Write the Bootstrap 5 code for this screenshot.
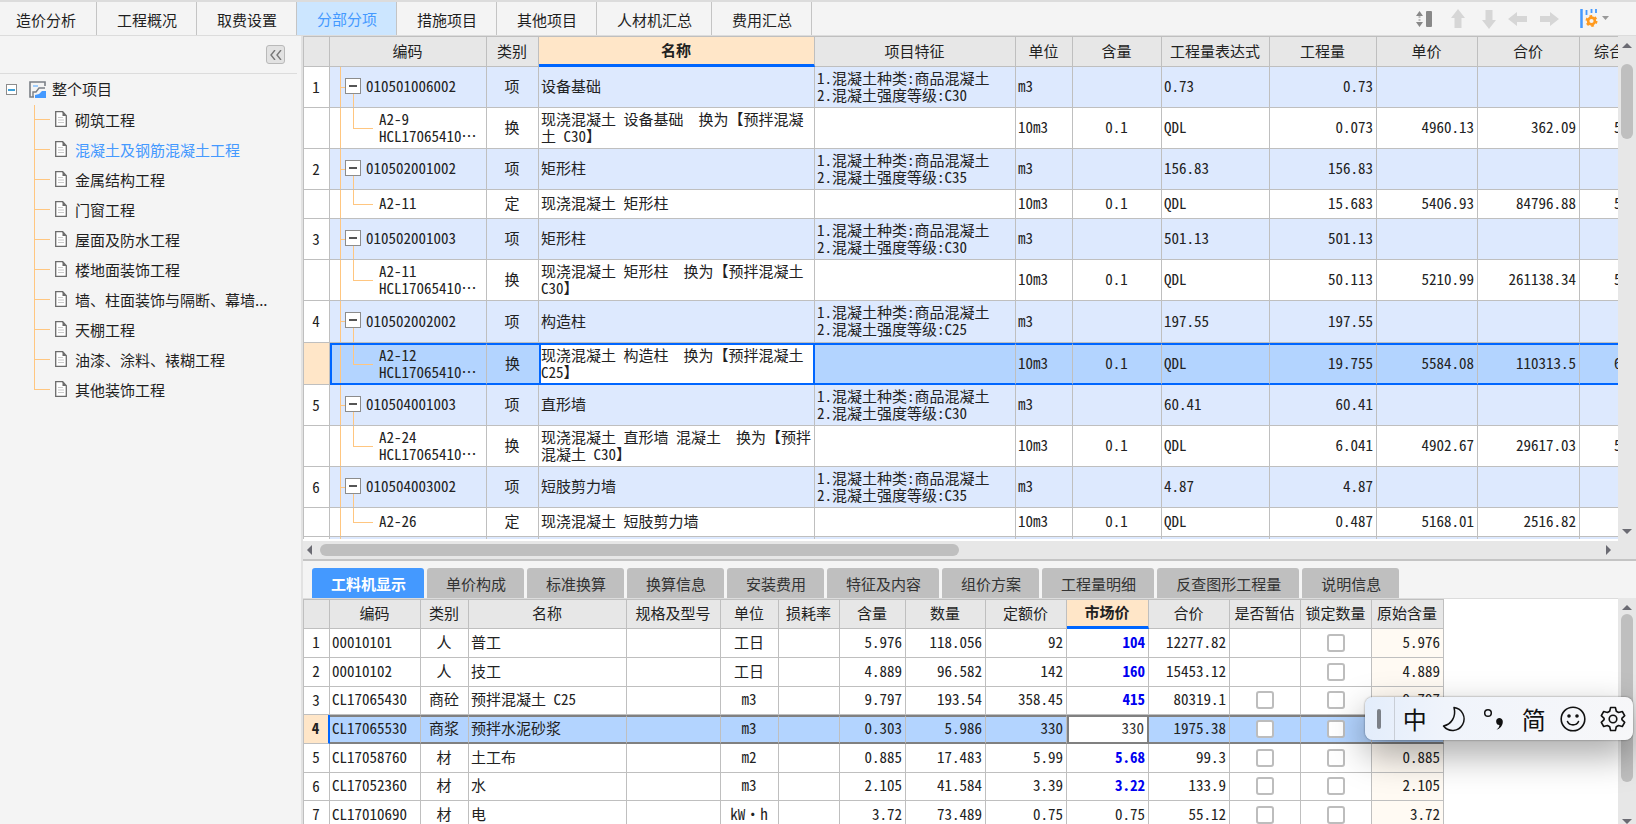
<!DOCTYPE html>
<html lang="zh-CN">
<head>
<meta charset="utf-8">
<meta name="viewport" content="width=device-width, initial-scale=1">
<title>分部分项</title>
<link rel="stylesheet" href="https://cdn.jsdelivr.net/npm/bootstrap@5.3.0/dist/css/bootstrap.min.css">
<style>
:root{--line:#bfbfbf;--tree:#ffc680;--accent:#0066ff;--bar:#e7e7e7;--thumb:#bfbfbf}
body{font-family:"Noto Sans CJK SC",sans-serif;font-size:15px;color:#1f1f1f;background:#f4f4f4}
button{font:inherit;color:inherit}

/* top bar */
.topbar{height:36px;border-top:2px solid #dcdcdc;border-bottom:1px solid #dcdcdc}
.topbar .nav-link{width:auto;height:33px;padding:0 19px 0 20px;line-height:36px;color:#1f1f1f;border-right:1px solid #c4c4c4;border-radius:0}
.topbar .nav-item:first-child .nav-link{padding:0 20px 0 16px}
.topbar .nav-link.active{background:#cce6ff;color:#4499ff;line-height:33px}
.tool{border:0;background:none;padding:0;display:flex}
.tools{padding-right:27px}

/* project tree */
.side{width:297px}
.side-head{height:38px;padding-right:12px;border-bottom:1px solid #dcdcdc}
.fold{width:19px;height:19px;padding:0;border:1px solid #b9b9b9;border-radius:3px;background:#e2e2e2}
.root{height:31px;padding-left:6px}
.box-sm{width:11px;height:11px;padding:0;border:1px solid #8c8c8c;background:#fff;color:#3da0d8}
.root-icon{margin-left:12px;margin-right:6px}
.tree li{height:30px;padding-left:55px;gap:8px;
  background:linear-gradient(var(--tree),var(--tree)) 34px 0/1px 100% no-repeat,linear-gradient(var(--tree),var(--tree)) 34px 14px/16px 1px no-repeat}
.tree li:last-child{background-size:1px 15px,16px 1px}
.tree svg{margin-bottom:2px}
.tree a{color:#1f1f1f;text-decoration:none;line-height:30px}
.tree a.active{color:#4499ff}
.work{border-left:2px solid #e2e2e2;margin-left:4px}

/* grids */
.sheet{table-layout:fixed;border-collapse:separate;border-spacing:0;margin:0;color:#222;background:#fff;line-height:17px;
  font-family:"Noto Sans Mono CJK SC","Liberation Mono","Noto Sans CJK SC",monospace;font-size:15px}
.sheet th,.sheet td{padding:0 3px 3px 2px;border-right:1px solid var(--line);border-bottom:1px solid var(--line);vertical-align:middle;white-space:nowrap;overflow:hidden}
.sheet th{background:#e7e7e7;font-weight:400;text-align:center;padding:0 1px 2px 0}
.sheet thead th{border-top:1px solid var(--line)}
.sheet tbody th{background:#fff}
.sheet thead .sorted{background:#ffe6c8;font-weight:700;border-bottom:3px solid var(--accent)}
.sheet tr>:first-child{border-left:1px solid var(--line)}
.bill thead tr{height:31px}
.bill tbody tr{height:41px}
.bill tbody tr.one{height:29px}
.bill tbody tr.tall{height:42px}
.bill .item td{background-color:#dde9fe}
.code{--t:linear-gradient(var(--tree),var(--tree))}
.item .code{padding-left:15px;background:var(--t) 10px 0/1px 100% no-repeat,var(--t) 10px 50%/6px 1px no-repeat,linear-gradient(transparent 50%,var(--tree) 50%) 23px 0/1px 100% no-repeat}
.sub .code{padding-left:49px;background:var(--t) 10px 0/1px 100% no-repeat,var(--t) 23px 50%/20px 1px no-repeat,linear-gradient(var(--tree) 50%,transparent 50%) 23px 0/1px 100% no-repeat}
.box{width:16px;height:16px;padding:0;border:1px solid #8c8c8c;background:#fff;margin-right:5px}
.bill .picked td{background-color:#b3d4ff;border-top:2px solid var(--accent);border-bottom:2px solid var(--accent)}
.bill .picked .code{border-left:2px solid var(--accent);padding-left:47px;background-position:8px 0,21px 50%,21px 0}
.bill .picked td.edit{background:#fff;border-left:2px solid var(--accent);border-right:2px solid var(--accent);padding-left:0}
.bill .picked .kind{border-right:0}
.sheet .picked th{background:#ffe6c8;font-weight:700}
.sheet th.cut{text-align:left;padding-left:14px}
.sheet td.cut{padding-left:34px}
.viewport{background:#fff}
.pane-top .viewport{border-bottom:2px solid #fff}
.mats thead tr{height:30px}
.mats tbody tr{height:29px}
.mats tbody tr:nth-child(3n){height:28px}
.mats .price{color:#0000f0;font-weight:700}
.mats .first-in{background:#fffaf3}
.mats .picked td{background:#b3d4ff;border-top:2px solid #808080;border-bottom:2px solid #808080}
.mats .picked td.edit{background:#fff;border-right:2px solid #808080;border-left:2px solid #808080;color:#333}
.mats .picked th{border-right:2px solid var(--accent)}
.sheet .form-check-input{width:18px;height:18px;margin:3px 0 0;border:2px solid #bdbdbd;border-radius:3px;display:block;margin-left:auto;margin-right:auto}

/* panes and scroll bars */
.pane-top{flex:524 1 0;border-bottom:2px solid #c4c4c4}
.pane-low{flex:264 1 0}
.vbar{width:18px;background:var(--bar);padding:7px 0}
.hbar{height:18px;background:var(--bar);padding:0 25px 0 4px}
.thumb{background:var(--thumb);border-radius:6px}
.vbar .thumb{width:12px}
.hbar .thumb{height:12px;width:49%}
.pane-top .vbar .thumb{height:75px}
.pane-low .vbar{padding:7px 0 0}
.pane-low .vbar .thumb{height:168px}
.detail{padding:7px 0 0 9px;gap:3px}
.detail .nav-link{height:30px;padding:0 18px 0 19px;line-height:31px;border-radius:3px 3px 0 0;background:#bfbfbf;color:#333}
.detail .nav-link.active{background:#4499ff;color:#fff;font-weight:700}
.rest{border-top:1px solid #dcdcdc}

/* input-method bar floating over the page */
.ime{right:3px;bottom:84px;width:268px;height:43px;border-radius:8px;background:linear-gradient(90deg,#e3edfb,#f0f4fb 30%,#f7f7f9);box-shadow:0 0 2px rgba(0,0,0,.5),0 14px 36px rgba(0,0,0,.36);color:#111;font-size:24px}
.grip{width:30px;border-right:1px solid #c9ced6}
.grip span{width:4px;height:20px;border-radius:2px;background:#7b8087}
.ime button{border:0;background:none;padding:0;width:40px;line-height:43px;display:flex;align-items:center;justify-content:center}
</style>
</head>
<body class="vh-100 d-flex flex-column overflow-hidden">

<header class="topbar d-flex justify-content-between flex-shrink-0">
  <ul class="nav flex-nowrap">
    <li class="nav-item"><a class="nav-link" href="#">造价分析</a></li>
    <li class="nav-item"><a class="nav-link" href="#">工程概况</a></li>
    <li class="nav-item"><a class="nav-link" href="#">取费设置</a></li>
    <li class="nav-item"><a class="nav-link active" href="#" aria-current="page">分部分项</a></li>
    <li class="nav-item"><a class="nav-link" href="#">措施项目</a></li>
    <li class="nav-item"><a class="nav-link" href="#">其他项目</a></li>
    <li class="nav-item"><a class="nav-link" href="#">人材机汇总</a></li>
    <li class="nav-item"><a class="nav-link" href="#">费用汇总</a></li>
  </ul>
  <div class="tools d-flex align-items-center">
    <button class="tool me-3" aria-label="行高"><svg width="18" height="18" viewBox="0 0 18 18"><path d="M0 6 3.500 1 7 6zM0 12l3.500 5L7 12z" fill="#888"/><path d="M3.500 6v6" stroke="#bbb" stroke-width="2" stroke-dasharray="2 1"/><rect x="10" y="1" width="6" height="16" rx="1" fill="#888"/></svg></button>
    <button class="tool" aria-label="上移"><svg width="16" height="20" viewBox="0 0 16 20"><path d="M8 0l7 9h-3.500v10h-7V9H1z" fill="#d6d6d6"/></svg></button>
    <button class="tool ms-3" aria-label="下移"><svg width="14" height="20" viewBox="0 0 14 20"><path d="M7 20L0 11h3.500V1h7v10H14z" fill="#d6d6d6"/></svg></button>
    <button class="tool ms-2 ps-1" aria-label="升级"><svg width="20" height="14" viewBox="0 0 20 14"><path d="M0 7l9-7v4h10v6H9v4z" fill="#d6d6d6"/></svg></button>
    <button class="tool ms-2 ps-1" aria-label="降级"><svg width="20" height="14" viewBox="0 0 20 14"><path d="M19 7l-9-7v4H0v6h10v4z" fill="#d6d6d6"/></svg></button>
    <button class="tool ms-3 ps-1 align-items-center" aria-label="列设置"><svg width="18" height="19" viewBox="0 0 18 19"><path d="M1.500 0v19" stroke="#4499ff" stroke-width="2.500"/><path d="M6.500 1v5M11.500 0v4M16 0v4" stroke="#4499ff" stroke-width="1.800"/><g transform="translate(11.500 12)" fill="none" stroke="#ff9a1f"><circle r="3.400" stroke-width="2.600"/><circle r="5" stroke-width="2" stroke-dasharray="2.600 2.640"/></g></svg><svg class="ms-1" width="7" height="5" viewBox="0 0 7 5"><path d="M0 0h7L3.500 4z" fill="#999"/></svg></button>
  </div>
</header>

<div class="d-flex flex-fill overflow-hidden">
  <aside class="side flex-shrink-0">
    <div class="side-head d-flex align-items-center justify-content-end">
      <button class="fold d-flex align-items-center justify-content-center" aria-label="收起"><svg width="12" height="10" viewBox="0 0 12 10" fill="none" stroke="#777" stroke-width="1.400"><path d="M5 0L1 5l4 5M11 0L7 5l4 5"/></svg></button>
    </div>
    <div class="root d-flex align-items-center">
      <button class="box-sm d-flex align-items-center justify-content-center" aria-label="折叠"><svg width="7" height="2"><path d="M0 1h7" stroke="currentColor" stroke-width="2"/></svg></button>
      <svg class="root-icon" width="17" height="17" viewBox="0 0 17 17" fill="none"><path d="M16 5V1H1v15h4" stroke="#7a7f86" stroke-width="1.600"/><path d="M4 5h5" stroke="#8ac4ff" stroke-width="1.600"/><path d="M4 16v-5h3l3-4h6" stroke="#7a7f86" stroke-width="1.400"/><path d="M6 17v-3l4-1 3-3h4v7z" fill="#4499ff"/></svg>
      <span>整个项目</span>
    </div>
    <ul class="tree list-unstyled m-0">
      <li class="d-flex align-items-center"><svg width="12" height="16"><use href="#doc"/></svg><a href="#">砌筑工程</a></li>
      <li class="d-flex align-items-center"><svg width="12" height="16"><use href="#doc"/></svg><a class="active" href="#">混凝土及钢筋混凝土工程</a></li>
      <li class="d-flex align-items-center"><svg width="12" height="16"><use href="#doc"/></svg><a href="#">金属结构工程</a></li>
      <li class="d-flex align-items-center"><svg width="12" height="16"><use href="#doc"/></svg><a href="#">门窗工程</a></li>
      <li class="d-flex align-items-center"><svg width="12" height="16"><use href="#doc"/></svg><a href="#">屋面及防水工程</a></li>
      <li class="d-flex align-items-center"><svg width="12" height="16"><use href="#doc"/></svg><a href="#">楼地面装饰工程</a></li>
      <li class="d-flex align-items-center"><svg width="12" height="16"><use href="#doc"/></svg><a href="#">墙、柱面装饰与隔断、幕墙...</a></li>
      <li class="d-flex align-items-center"><svg width="12" height="16"><use href="#doc"/></svg><a href="#">天棚工程</a></li>
      <li class="d-flex align-items-center"><svg width="12" height="16"><use href="#doc"/></svg><a href="#">油漆、涂料、裱糊工程</a></li>
      <li class="d-flex align-items-center"><svg width="12" height="16"><use href="#doc"/></svg><a href="#">其他装饰工程</a></li>
    </ul>
    <svg class="d-none"><symbol id="doc" viewBox="0 0 12 16"><path d="M.7.7h7l3.600 4v10.600H.7z" fill="#fff" stroke="#6b6b6b" stroke-width="1.300"/><path d="M7.500.7v4.300h4z" fill="#6b6b6b"/><path d="M3 6.500h5M3 9h6M3 11.500h6" stroke="#c9c9c9"/></symbol></svg>
  </aside>

  <main class="work d-flex flex-column flex-fill overflow-hidden">
    <section class="pane-top d-flex flex-column overflow-hidden">
      <div class="d-flex flex-fill overflow-hidden">
        <div class="viewport flex-fill overflow-hidden">
          <table class="sheet bill" style="width:1366px">
            <colgroup><col style="width:27px"><col style="width:157px"><col style="width:52px"><col style="width:276px"><col style="width:201px"><col style="width:57px"><col style="width:89px"><col style="width:108px"><col style="width:107px"><col style="width:101px"><col style="width:102px"><col style="width:89px"></colgroup>
            <thead><tr><th></th><th>编码</th><th>类别</th><th class="sorted">名称</th><th>项目特征</th><th>单位</th><th>含量</th><th>工程量表达式</th><th>工程量</th><th>单价</th><th>合价</th><th class="cut">综合</th></tr></thead>
            <tbody>
              <tr class="item"><th>1</th><td class="code"><div class="d-flex align-items-center"><button class="box d-flex align-items-center justify-content-center" aria-label="折叠"><svg width="8" height="2"><path d="M0 1h8" stroke="#555" stroke-width="2"/></svg></button>010501006002</div></td><td class="text-center">项</td><td>设备基础</td><td>1.混凝土种类:商品混凝土<br>2.混凝土强度等级:C30</td><td>m3</td><td></td><td>0.73</td><td class="text-end">0.73</td><td></td><td></td><td></td></tr>
              <tr class="sub"><th></th><td class="code">A2-9<br>HCL17065410⋯</td><td class="text-center">换</td><td>现浇混凝土 设备基础&nbsp; 换为【预拌混凝<br>土 C30】</td><td></td><td>10m3</td><td class="text-center">0.1</td><td>QDL</td><td class="text-end">0.073</td><td class="text-end">4960.13</td><td class="text-end">362.09</td><td class="cut">5</td></tr>
              <tr class="item"><th>2</th><td class="code"><div class="d-flex align-items-center"><button class="box d-flex align-items-center justify-content-center" aria-label="折叠"><svg width="8" height="2"><path d="M0 1h8" stroke="#555" stroke-width="2"/></svg></button>010502001002</div></td><td class="text-center">项</td><td>矩形柱</td><td>1.混凝土种类:商品混凝土<br>2.混凝土强度等级:C35</td><td>m3</td><td></td><td>156.83</td><td class="text-end">156.83</td><td></td><td></td><td></td></tr>
              <tr class="sub one"><th></th><td class="code">A2-11</td><td class="text-center">定</td><td>现浇混凝土 矩形柱</td><td></td><td>10m3</td><td class="text-center">0.1</td><td>QDL</td><td class="text-end">15.683</td><td class="text-end">5406.93</td><td class="text-end">84796.88</td><td class="cut">5</td></tr>
              <tr class="item"><th>3</th><td class="code"><div class="d-flex align-items-center"><button class="box d-flex align-items-center justify-content-center" aria-label="折叠"><svg width="8" height="2"><path d="M0 1h8" stroke="#555" stroke-width="2"/></svg></button>010502001003</div></td><td class="text-center">项</td><td>矩形柱</td><td>1.混凝土种类:商品混凝土<br>2.混凝土强度等级:C30</td><td>m3</td><td></td><td>501.13</td><td class="text-end">501.13</td><td></td><td></td><td></td></tr>
              <tr class="sub"><th></th><td class="code">A2-11<br>HCL17065410⋯</td><td class="text-center">换</td><td>现浇混凝土 矩形柱&nbsp; 换为【预拌混凝土<br>C30】</td><td></td><td>10m3</td><td class="text-center">0.1</td><td>QDL</td><td class="text-end">50.113</td><td class="text-end">5210.99</td><td class="text-end">261138.34</td><td class="cut">5</td></tr>
              <tr class="item tall"><th>4</th><td class="code"><div class="d-flex align-items-center"><button class="box d-flex align-items-center justify-content-center" aria-label="折叠"><svg width="8" height="2"><path d="M0 1h8" stroke="#555" stroke-width="2"/></svg></button>010502002002</div></td><td class="text-center">项</td><td>构造柱</td><td>1.混凝土种类:商品混凝土<br>2.混凝土强度等级:C25</td><td>m3</td><td></td><td>197.55</td><td class="text-end">197.55</td><td></td><td></td><td></td></tr>
              <tr class="sub tall picked"><th></th><td class="code">A2-12<br>HCL17065410⋯</td><td class="kind text-center">换</td><td class="edit">现浇混凝土 构造柱&nbsp; 换为【预拌混凝土<br>C25】</td><td></td><td>10m3</td><td class="text-center">0.1</td><td>QDL</td><td class="text-end">19.755</td><td class="text-end">5584.08</td><td class="text-end">110313.5</td><td class="cut">6</td></tr>
              <tr class="item"><th>5</th><td class="code"><div class="d-flex align-items-center"><button class="box d-flex align-items-center justify-content-center" aria-label="折叠"><svg width="8" height="2"><path d="M0 1h8" stroke="#555" stroke-width="2"/></svg></button>010504001003</div></td><td class="text-center">项</td><td>直形墙</td><td>1.混凝土种类:商品混凝土<br>2.混凝土强度等级:C30</td><td>m3</td><td></td><td>60.41</td><td class="text-end">60.41</td><td></td><td></td><td></td></tr>
              <tr class="sub"><th></th><td class="code">A2-24<br>HCL17065410⋯</td><td class="text-center">换</td><td>现浇混凝土 直形墙 混凝土&nbsp; 换为【预拌<br>混凝土 C30】</td><td></td><td>10m3</td><td class="text-center">0.1</td><td>QDL</td><td class="text-end">6.041</td><td class="text-end">4902.67</td><td class="text-end">29617.03</td><td class="cut">5</td></tr>
              <tr class="item"><th>6</th><td class="code"><div class="d-flex align-items-center"><button class="box d-flex align-items-center justify-content-center" aria-label="折叠"><svg width="8" height="2"><path d="M0 1h8" stroke="#555" stroke-width="2"/></svg></button>010504003002</div></td><td class="text-center">项</td><td>短肢剪力墙</td><td>1.混凝土种类:商品混凝土<br>2.混凝土强度等级:C35</td><td>m3</td><td></td><td>4.87</td><td class="text-end">4.87</td><td></td><td></td><td></td></tr>
              <tr class="sub one"><th></th><td class="code">A2-26</td><td class="text-center">定</td><td>现浇混凝土 短肢剪力墙</td><td></td><td>10m3</td><td class="text-center">0.1</td><td>QDL</td><td class="text-end">0.487</td><td class="text-end">5168.01</td><td class="text-end">2516.82</td><td></td></tr>
              <tr class="item"><th></th><td class="code"></td><td></td><td></td><td></td><td></td><td></td><td></td><td></td><td></td><td></td><td></td></tr>
            </tbody>
          </table>
        </div>
        <div class="vbar d-flex flex-column align-items-center justify-content-between flex-shrink-0">
          <div class="d-flex flex-column align-items-center">
            <svg class="mb-3" width="10" height="5"><path d="M0 5l5-5 5 5z" fill="#6b6b73"/></svg>
            <div class="thumb"></div>
          </div>
          <svg width="10" height="5"><path d="M0 0l5 5 5-5z" fill="#6b6b73"/></svg>
        </div>
      </div>
      <div class="hbar d-flex align-items-center flex-shrink-0">
        <svg class="me-2 flex-shrink-0" width="5" height="10"><path d="M5 0L0 5l5 5z" fill="#6b6b73"/></svg>
        <div class="thumb"></div>
        <svg class="ms-auto flex-shrink-0" width="5" height="10"><path d="M0 0l5 5-5 5z" fill="#6b6b73"/></svg>
      </div>
    </section>

    <section class="pane-low d-flex flex-column overflow-hidden">
      <ul class="detail nav flex-nowrap flex-shrink-0">
        <li><a class="nav-link active" href="#">工料机显示</a></li>
        <li><a class="nav-link" href="#">单价构成</a></li>
        <li><a class="nav-link" href="#">标准换算</a></li>
        <li><a class="nav-link" href="#">换算信息</a></li>
        <li><a class="nav-link" href="#">安装费用</a></li>
        <li><a class="nav-link" href="#">特征及内容</a></li>
        <li><a class="nav-link" href="#">组价方案</a></li>
        <li><a class="nav-link" href="#">工程量明细</a></li>
        <li><a class="nav-link" href="#">反查图形工程量</a></li>
        <li><a class="nav-link" href="#">说明信息</a></li>
      </ul>
      <div class="d-flex flex-fill overflow-hidden">
        <div class="viewport rest flex-fill overflow-hidden">
          <table class="sheet mats" style="width:1141px">
            <colgroup><col style="width:27px"><col style="width:91px"><col style="width:48px"><col style="width:158px"><col style="width:94px"><col style="width:58px"><col style="width:61px"><col style="width:66px"><col style="width:80px"><col style="width:81px"><col style="width:82px"><col style="width:81px"><col style="width:71px"><col style="width:71px"><col style="width:72px"></colgroup>
            <thead><tr><th></th><th>编码</th><th>类别</th><th>名称</th><th>规格及型号</th><th>单位</th><th>损耗率</th><th>含量</th><th>数量</th><th>定额价</th><th class="sorted">市场价</th><th>合价</th><th>是否暂估</th><th>锁定数量</th><th>原始含量</th></tr></thead>
            <tbody>
              <tr><th>1</th><td>00010101</td><td class="text-center">人</td><td>普工</td><td></td><td class="text-center">工日</td><td></td><td class="text-end">5.976</td><td class="text-end">118.056</td><td class="text-end">92</td><td class="text-end price">104</td><td class="text-end">12277.82</td><td></td><td><input class="form-check-input" type="checkbox" aria-label="锁定数量 1"></td><td class="text-end first-in">5.976</td></tr>
              <tr><th>2</th><td>00010102</td><td class="text-center">人</td><td>技工</td><td></td><td class="text-center">工日</td><td></td><td class="text-end">4.889</td><td class="text-end">96.582</td><td class="text-end">142</td><td class="text-end price">160</td><td class="text-end">15453.12</td><td></td><td><input class="form-check-input" type="checkbox" aria-label="锁定数量 2"></td><td class="text-end first-in">4.889</td></tr>
              <tr><th>3</th><td>CL17065430</td><td class="text-center">商砼</td><td>预拌混凝土 C25</td><td></td><td class="text-center">m3</td><td></td><td class="text-end">9.797</td><td class="text-end">193.54</td><td class="text-end">358.45</td><td class="text-end price">415</td><td class="text-end">80319.1</td><td><input class="form-check-input" type="checkbox" aria-label="是否暂估 3"></td><td><input class="form-check-input" type="checkbox" aria-label="锁定数量 3"></td><td class="text-end first-in">9.797</td></tr>
              <tr class="picked"><th>4</th><td>CL17065530</td><td class="text-center">商浆</td><td>预拌水泥砂浆</td><td></td><td class="text-center">m3</td><td></td><td class="text-end">0.303</td><td class="text-end">5.986</td><td class="text-end">330</td><td class="text-end edit">330</td><td class="text-end">1975.38</td><td><input class="form-check-input" type="checkbox" aria-label="是否暂估 4"></td><td><input class="form-check-input" type="checkbox" aria-label="锁定数量 4"></td><td></td></tr>
              <tr><th>5</th><td>CL17058760</td><td class="text-center">材</td><td>土工布</td><td></td><td class="text-center">m2</td><td></td><td class="text-end">0.885</td><td class="text-end">17.483</td><td class="text-end">5.99</td><td class="text-end price">5.68</td><td class="text-end">99.3</td><td><input class="form-check-input" type="checkbox" aria-label="是否暂估 5"></td><td><input class="form-check-input" type="checkbox" aria-label="锁定数量 5"></td><td class="text-end first-in">0.885</td></tr>
              <tr><th>6</th><td>CL17052360</td><td class="text-center">材</td><td>水</td><td></td><td class="text-center">m3</td><td></td><td class="text-end">2.105</td><td class="text-end">41.584</td><td class="text-end">3.39</td><td class="text-end price">3.22</td><td class="text-end">133.9</td><td><input class="form-check-input" type="checkbox" aria-label="是否暂估 6"></td><td><input class="form-check-input" type="checkbox" aria-label="锁定数量 6"></td><td class="text-end first-in">2.105</td></tr>
              <tr><th>7</th><td>CL17010690</td><td class="text-center">材</td><td>电</td><td></td><td class="text-center">kW·h</td><td></td><td class="text-end">3.72</td><td class="text-end">73.489</td><td class="text-end">0.75</td><td class="text-end">0.75</td><td class="text-end">55.12</td><td><input class="form-check-input" type="checkbox" aria-label="是否暂估 7"></td><td><input class="form-check-input" type="checkbox" aria-label="锁定数量 7"></td><td class="text-end first-in">3.72</td></tr>
            </tbody>
          </table>
        </div>
        <div class="vbar d-flex flex-column align-items-center justify-content-between flex-shrink-0">
          <div class="d-flex flex-column align-items-center">
            <svg class="mb-1" width="10" height="5"><path d="M0 5l5-5 5 5z" fill="#6b6b73"/></svg>
            <div class="thumb"></div>
          </div>
          <svg width="10" height="5"><path d="M0 0l5 5 5-5z" fill="#6b6b73"/></svg>
        </div>
      </div>
    </section>
  </main>
</div>

<div class="ime position-absolute d-flex align-items-stretch overflow-visible">
  <div class="grip d-flex align-items-center justify-content-center"><span></span></div>
  <button>中</button>
  <button aria-label="半角"><svg width="26" height="26" viewBox="0 0 26 26" fill="none" stroke="#111" stroke-width="1.500" stroke-linejoin="round"><path d="M13 1.500A11.500 11.500 0 1 1 2.500 20C10 18.500 15.500 11 13 1.500z"/></svg></button>
  <button aria-label="标点"><svg width="22" height="24" viewBox="0 0 22 24"><circle cx="5" cy="6" r="3.300" fill="none" stroke="#111" stroke-width="1.500"/><path d="M16 11a3.600 3.600 0 0 1 3.800 3.800c0 4-3 7-6.300 8 2-1.600 2.900-3 2.900-4.700a3.600 3.600 0 0 1-.4-7.100z" fill="#111"/></svg></button>
  <button>简</button>
  <button aria-label="表情"><svg width="26" height="26" viewBox="0 0 26 26" fill="none" stroke="#111" stroke-width="1.600" stroke-linecap="round"><circle cx="13" cy="13" r="11.800"/><path d="M7.500 15.500c2 4.500 9 4.500 11 0"/><circle cx="9" cy="10" r="1" fill="#111"/><circle cx="17" cy="10" r="1" fill="#111"/></svg></button>
  <button aria-label="设置"><svg width="26" height="26" viewBox="0 0 26 26" fill="none" stroke="#111" stroke-width="1.600" stroke-linejoin="round"><path d="M10.600 1.500h4.800l.9 3.700 2.300 1.300 3.700-1 2.400 4.100-2.800 2.700v1.400l2.800 2.700-2.400 4.100-3.700-1-2.300 1.300-.9 3.700h-4.800l-.9-3.700-2.300-1.300-3.700 1-2.400-4.100 2.800-2.700v-1.400L1.300 9.600l2.400-4.100 3.700 1 2.300-1.300z"/><circle cx="13" cy="13" r="3.800"/></svg></button>
</div>

<script src="https://cdn.jsdelivr.net/npm/bootstrap@5.3.0/dist/js/bootstrap.bundle.min.js"></script>
</body>
</html>
